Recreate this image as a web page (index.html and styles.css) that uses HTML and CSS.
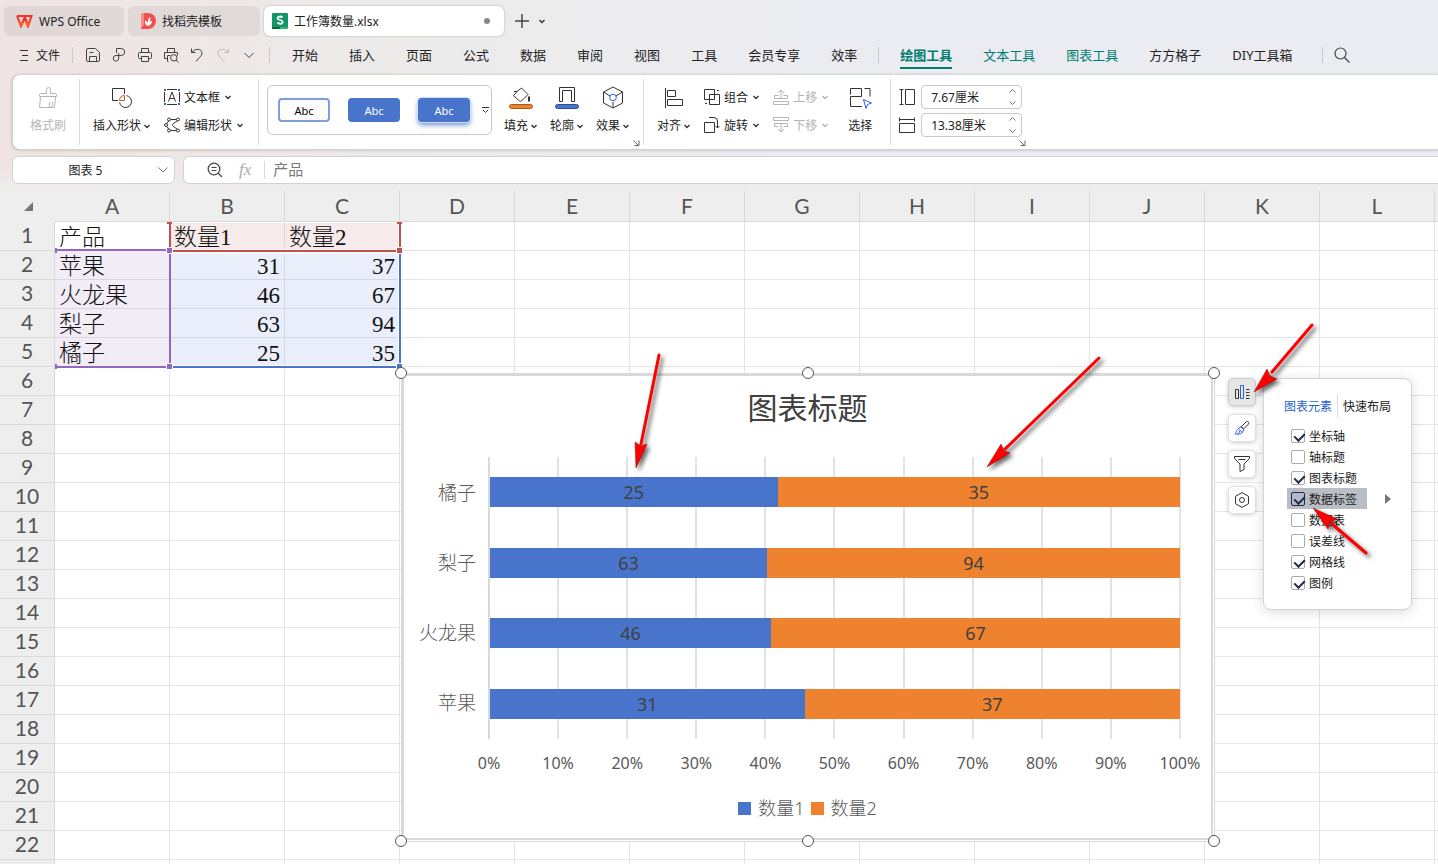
FILE: index.html
```html
<!DOCTYPE html>
<html lang="zh-CN">
<head>
  <meta charset="UTF-8">
  <meta name="viewport" content="width=device-width, initial-scale=1.0">
  <title>工作簿数量.xlsx - WPS Office</title>
  <link rel="stylesheet" href="styles.css">
</head>
<body>

  <svg class="defs" aria-hidden="true">
    <symbol id="chev" viewBox="0 0 8 8"><path d="M1.5 3 4 5.5 6.5 3" fill="none" stroke="currentColor" stroke-width="1.4"/></symbol>
    <symbol id="launch" viewBox="0 0 7 7"><path d="M.5 1.5 5 6M6 1.500V6.500H1.500" fill="none" stroke="#666"/></symbol>
  </svg>

  <header class="tabs">
    <button class="doc-tab home">
      <svg width="17" height="14" viewBox="0 0 17 14"><path d="M1 2h14.500L12 12 8.500 4 5 12 1 2M5 2l3.500 0 3.500 9" fill="none" stroke="#f8302c" stroke-width="2"/><path d="M3 7l2 5 2-4.500M10 7.500l2 4.500 2-5" fill="none" stroke="#ff5a22" stroke-width="2"/></svg>
      <span>WPS Office</span>
    </button>
    <button class="doc-tab docer">
      <svg width="15" height="16" viewBox="0 0 15 16"><path d="M0 0h7a8 8 0 0 1 0 16H0z" fill="#f2504f"/><path d="M0 0h3v12L0 15z" fill="#f98b86"/><path d="M7 13C4 12 3.500 9 4.500 7.500c1.500.5 2 2 2.300 3C6.500 8 7.500 5.500 9 4c1 2.500 0 4-.8 5.500C9 8.500 10 8 11 8c0 2.500-1.500 4.500-4 5z" fill="#fff"/></svg>
      <span>找稻壳模板</span>
    </button>
    <button class="doc-tab active">
      <svg width="16" height="16" viewBox="0 0 16 16"><rect width="16" height="16" rx="1" fill="#139566"/><path d="M0 14h8v2H0z" fill="#0b6b49"/><path d="M8 14h8v2H8z" fill="#31b681"/><path d="M10.500 4.500C9 3 5.500 3.200 5.500 5.200 5.500 7.500 10.700 6.500 10.700 9c0 2.200-3.700 2.200-5.400.7" fill="none" stroke="#fff" stroke-width="1.800"/></svg>
      <span>工作簿数量.xlsx</span>
      <i class="unsaved"></i>
    </button>
    <button class="plain add" aria-label="新建"><svg width="14" height="14" viewBox="0 0 14 14"><path d="M7 0v14M0 7h14" stroke="#444" stroke-width="1.500"/></svg></button>
    <button class="plain" aria-label="标签列表"><svg class="chev"><use href="#chev"/></svg></button>
  </header>

  <nav class="menu">
    <button class="plain file">
      <svg width="10" height="12" viewBox="0 0 10 12"><path d="M1 1.500h8M3 6.500h6M1 11.500h8" stroke="#333"/></svg>
      <span>文件</span>
    </button>
    <i class="sep"></i>
    <div class="quick">
      <button class="plain" aria-label="保存"><svg width="16" height="16" viewBox="0 0 16 16"><path d="M14.500 13V5.500l-4-4H3A1.500 1.500 0 0 0 1.500 3v10A1.500 1.500 0 0 0 3 14.500h10a1.500 1.500 0 0 0 1.500-1.500zM4.500 14.500v-5h7v5M4.500 5.500h4"/></svg></button>
      <button class="plain" aria-label="输出为PDF"><svg width="16" height="16" viewBox="0 0 16 16"><path d="M5.500 6V1.500h4.700a3.500 3.500 0 0 1 0 7H5a2.800 2.800 0 1 0 2.700 3.500V6"/></svg></button>
      <button class="plain" aria-label="打印"><svg width="16" height="16" viewBox="0 0 16 16"><path d="M4.500 5.500v-4h7v4M4.500 11.500h-2a1 1 0 0 1-1-1v-4a1 1 0 0 1 1-1h11a1 1 0 0 1 1 1v4a1 1 0 0 1-1 1h-2M4.500 9.500h7v5h-7z"/></svg></button>
      <button class="plain" aria-label="打印预览"><svg width="16" height="16" viewBox="0 0 16 16"><path d="M4.500 5.500v-4h7v4M5 11.500H1.500v-6h13v3M5.500 14.500h-1v-6h3M13 13l2.500 2.500"/><circle cx="10.800" cy="10.800" r="3.200"/></svg></button>
      <button class="plain" aria-label="撤销"><svg width="16" height="16" viewBox="0 0 16 16"><path d="M2.500 1.500v4h4M2.500 5.500C7 .5 13 2 13 6c0 3-3 4.500-6 8.500"/></svg></button>
      <button class="plain off" aria-label="恢复"><svg width="16" height="16" viewBox="0 0 16 16"><path d="M13.500 1.500v4h-4M13.500 5.500C9 .5 3 2 3 6c0 3 3 4.500 6 8.500"/></svg></button>
      <button class="plain" aria-label="更多"><svg width="16" height="16" viewBox="0 0 16 16"><path d="m3.500 6 4.500 4.500L12.500 6"/></svg></button>
    </div>
    <i class="sep"></i>
    <div class="menu-tabs">
      <a href="#">开始</a>
      <a href="#">插入</a>
      <a href="#">页面</a>
      <a href="#">公式</a>
      <a href="#">数据</a>
      <a href="#">审阅</a>
      <a href="#">视图</a>
      <a href="#">工具</a>
      <a href="#">会员专享</a>
      <a href="#">效率</a>
      <i class="sep"></i>
      <a href="#" class="tool current">绘图工具</a>
      <a href="#" class="tool">文本工具</a>
      <a href="#" class="tool">图表工具</a>
      <a href="#">方方格子</a>
      <a href="#">DIY工具箱</a>
    </div>
    <i class="sep"></i>
    <button class="plain search" aria-label="搜索"><svg width="16" height="16" viewBox="0 0 16 16"><circle cx="6.500" cy="6.500" r="5.500" fill="none" stroke="#444" stroke-width="1.200"/><path d="m10.500 10.500 5 5" stroke="#444" stroke-width="1.200"/></svg></button>
  </nav>

  <section class="ribbon">
    <div class="group paint">
      <button class="big off">
        <svg width="24" height="24" viewBox="0 0 24 24"><path d="M3.500 10.500h17v-2a1 1 0 0 0-1-1h-5v-4a2 2 0 0 0-4 0v4h-6a1 1 0 0 0-1 1zM4.500 10.500l-1 11h15l1-11M14 16l-1 5M16.500 16l-.5 5"/></svg>
        <span>格式刷</span>
      </button>
    </div>
    <div class="group shapes">
      <button class="big">
        <svg width="24" height="24" viewBox="0 0 24 24"><path d="M8 14.500H2.500v-12h12V8"/><path d="M16.500 9.600a6 6 0 1 1-6.900 6.900"/><path d="M14.500 9.500v5h-5c0-3 2-5 5-5z" stroke="#d2571b"/></svg>
        <span>插入形状<svg class="chev"><use href="#chev"/></svg></span>
      </button>
      <div class="stack">
        <button class="row"><svg width="16" height="16" viewBox="0 0 16 16"><path d="M3 .5h10M3 15.500h10M.5 3v10M15.500 3v10M4.500 12.500 8 3l3.500 9.500M5.700 9.500h4.600"/><path d="M0 0h2v2H0zM14 0h2v2h-2zM0 14h2v2H0zM14 14h2v2h-2z" fill="#2f5fe0" stroke="none"/></svg>文本框<svg class="chev"><use href="#chev"/></svg></button>
        <button class="row"><svg width="16" height="16" viewBox="0 0 16 16"><path d="M6.500 2.500h6M3 6.500 4.500 4M3 9.500 4.500 12M6.500 13.500h6M13 4C10 6 8.500 7 8.500 8s1.500 2 4.500 4"/><circle cx="5" cy="2.500" r="1.500"/><circle cx="14" cy="2.500" r="1.500"/><circle cx="2" cy="8" r="1.500"/><circle cx="5" cy="13.500" r="1.500"/><circle cx="14" cy="13.500" r="1.500"/></svg>编辑形状<svg class="chev"><use href="#chev"/></svg></button>
      </div>
    </div>
    <div class="group styles">
      <div class="gallery">
        <button class="sample outline">Abc</button>
        <button class="sample solid">Abc</button>
        <button class="sample solid raised">Abc</button>
        <button class="plain more" aria-label="更多样式"><svg width="7" height="7" viewBox="0 0 7 7"><path d="M0 .5h7M1 3l2.500 2.500L6 3" fill="none" stroke="#333"/></svg></button>
      </div>
      <button class="big">
        <svg width="24" height="24" viewBox="0 0 24 24"><path d="M5 5.500h3L12.500 2 19 8.500 12.500 15a1.500 1.500 0 0 1-2 0L4.500 9.500 8 5.500"/><path d="M20 10.500v5" stroke-width="2"/><rect x=".5" y="18.500" width="23" height="4" rx="2" fill="#f0822d" stroke="#ad591a"/></svg>
        <span>填充<svg class="chev"><use href="#chev"/></svg></span>
      </button>
      <button class="big">
        <svg width="24" height="24" viewBox="0 0 24 24"><path d="M4.500 15.500v-14h15v14h-3v-11h-9v11z"/><rect x=".5" y="18.500" width="23" height="4" rx="2" fill="#4874cb" stroke="#2b4f95"/></svg>
        <span>轮廓<svg class="chev"><use href="#chev"/></svg></span>
      </button>
      <button class="big">
        <svg width="24" height="24" viewBox="0 0 24 24"><path d="m12 1 9.500 5v11L12 22l-9.500-5V6zM2.500 6 9 10M21.500 6 15 10M12 16v6"/><circle cx="12" cy="11.500" r="3.300" stroke="#2f5fe0"/></svg>
        <span>效果<svg class="chev"><use href="#chev"/></svg></span>
      </button>
      <button class="plain launch" aria-label="形状格式"><svg width="7" height="7"><use href="#launch"/></svg></button>
    </div>
    <div class="group arrange">
      <button class="big">
        <svg width="24" height="24" viewBox="0 0 24 24"><path d="M3.500 2v20M5.500 4.500h8v6h-8zM5.500 13.500h15v6h-15z"/></svg>
        <span>对齐<svg class="chev"><use href="#chev"/></svg></span>
      </button>
      <div class="stack">
        <button class="row"><svg width="16" height="16" viewBox="0 0 16 16"><path d="M.5.500h10v10H.5zM5.500 5.500h10v10h-10zM13 1.500h2M1 14.500h2"/></svg>组合<svg class="chev"><use href="#chev"/></svg></button>
        <button class="row"><svg width="16" height="16" viewBox="0 0 16 16"><path d="M.5 5.500h10v10H.5zM5 .5h5a3.500 3.500 0 0 1 3.500 3.500v7M11.500 9l2 2 2-2"/></svg>旋转<svg class="chev"><use href="#chev"/></svg></button>
      </div>
      <div class="stack off">
        <button class="row"><svg width="16" height="16" viewBox="0 0 16 16"><path d="M8 10V1.500M5 4l3-3 3 3M5.500 6.500h-4v3h13v-3h-4M.5 12.500h15v3H.5z"/></svg>上移<svg class="chev"><use href="#chev"/></svg></button>
        <button class="row"><svg width="16" height="16" viewBox="0 0 16 16"><path d="M8 6v8.500M5 12l3 3 3-3M5.500 9.500h-4v-3h13v3h-4M.5.500h15v3H.5z"/></svg>下移<svg class="chev"><use href="#chev"/></svg></button>
      </div>
      <button class="big pick">
        <svg width="24" height="24" viewBox="0 0 24 24"><path d="M2.500 8.500v-6h11v8h-11v10H14M16.500 2.500H22v8"/><path d="m15.500 13.500 8 3.500-4 1.500-1.500 4z" stroke="#2f5fe0"/></svg>
        <span>选择</span>
      </button>
    </div>
    <div class="group size">
      <div class="stack">
        <label class="spin"><svg width="16" height="16" viewBox="0 0 16 16"><path d="M2.500.500v15M.5.500h4M.5 15.500h4M6.500.500h9v15h-9z"/></svg>
          <span class="box"><input type="text" value="7.67厘米" aria-label="高度"><svg width="9" height="18" viewBox="0 0 9 18"><path d="m1.500 4.500 3-3 3 3M1.500 13.500l3 3 3-3"/></svg></span>
        </label>
        <label class="spin"><svg width="16" height="16" viewBox="0 0 16 16"><path d="M.5 2.500h15M.5.500v4M15.500.500v4M.5 6.500h15v9H.5z"/></svg>
          <span class="box"><input type="text" value="13.38厘米" aria-label="宽度"><svg width="9" height="18" viewBox="0 0 9 18"><path d="m1.500 4.500 3-3 3 3M1.500 13.500l3 3 3-3"/></svg></span>
        </label>
      </div>
      <button class="plain launch" aria-label="大小和位置"><svg width="7" height="7"><use href="#launch"/></svg></button>
    </div>
  </section>

  <section class="formula-bar">
    <div class="name-box">
      <input type="text" value="图表 5" aria-label="名称框">
      <svg width="10" height="6" viewBox="0 0 10 6"><path d="m.5.500 4.500 4.500L9.500.500" fill="none" stroke="#777"/></svg>
    </div>
    <div class="formula">
      <svg width="16" height="16" viewBox="0 0 16 16"><circle cx="7" cy="7" r="5.800" fill="none" stroke="#444" stroke-width="1.300"/><path d="m11 11 4 4M4.500 5.500h5M4.500 8.500h5" stroke="#444" stroke-width="1.200"/></svg>
      <em class="fx">fx</em>
      <input type="text" value="产品" aria-label="编辑栏">
    </div>
  </section>

  <main class="sheet">
    <table class="grid" id="grid"></table>

    <!-- source ranges of the chart: series names, categories, values -->
    <svg class="ranges" width="410" height="190" viewBox="0 191 410 190">
      <path d="M169 251.500h230" stroke="#fff" stroke-width="4"/>
      <path d="M400 222v145M170 367h230" fill="none" stroke="#fff" stroke-width="4"/>
      <path d="M400 253v114H172" fill="none" stroke="#4874cb" stroke-width="2"/>
      <path d="M56 250h114v117H56" fill="none" stroke="#9168c0" stroke-width="2"/>
      <path d="M170 222v26M172 251h228v-29" fill="none" stroke="#c0504d" stroke-width="2"/>
      <path d="M170 222.500h229" stroke="#fff"/>
      <g stroke="#fff">
        <path d="M166.500 247.500h6v6h-6zM166.500 363.500h6v6h-6z" fill="#9168c0"/>
        <path d="M396.500 247.500h6v6h-6z" fill="#c0504d"/>
        <path d="M396.500 363.500h6v6h-6z" fill="#4874cb"/>
      </g>
      <path d="M167 222h5v2h-5zM397 222h5v2h-5z" fill="#c0504d"/>
      <path d="M55 248h2v5h-2zM55 364h2v5h-2z" fill="#9168c0"/>
    </svg>

    <figure class="chart">
      <div class="chart-area">
        <figcaption>图表标题</figcaption>
        <div class="plot-row">
          <div class="cats"><span>橘子</span><span>梨子</span><span>火龙果</span><span>苹果</span></div>
          <div class="plot">
            <div class="lines"><i></i><i></i><i></i><i></i><i></i><i></i><i></i><i></i><i></i><i></i></div>
            <div class="bar"><span class="s1" style="width:41.67%">25</span><span class="s2">35</span></div>
            <div class="bar"><span class="s1" style="width:40.13%">63</span><span class="s2">94</span></div>
            <div class="bar"><span class="s1" style="width:40.71%">46</span><span class="s2">67</span></div>
            <div class="bar"><span class="s1" style="width:45.59%">31</span><span class="s2">37</span></div>
          </div>
        </div>
        <div class="axis"><span>0%</span><span>10%</span><span>20%</span><span>30%</span><span>40%</span><span>50%</span><span>60%</span><span>70%</span><span>80%</span><span>90%</span><span>100%</span></div>
        <div class="legend"><span><i class="s1"></i>数量1</span><span><i class="s2"></i>数量2</span></div>
      </div>
      <i class="handle tl"></i><i class="handle tc"></i><i class="handle tr"></i>
      <i class="handle bl"></i><i class="handle bc"></i><i class="handle br"></i>
    </figure>

    <div class="chart-tools">
      <button class="on" aria-label="图表元素"><svg width="16" height="16" viewBox="0 0 16 16"><path d="M1.500 5.500h3v9h-3zM12 5.500h3.500M12 8.500h3.500M12 11.500h3.500M12 14.500h3.500"/><path d="M6.500 1.500h3v13h-3z" stroke="#2f5fe0"/></svg></button>
      <button aria-label="图表样式"><svg width="16" height="16" viewBox="0 0 16 16"><path d="M7 7 12 2c2-1.500 3.500.5 2.500 2L9.500 9z"/><path d="M7 7c1.500 0 2.500 1 2.500 2.500 0 4.500-5 5-8.500 4.500 1.500-1.500 1-3 2.500-4.500 1-1.300 2-2.500 3.500-2.500zM4.500 8.500 8 12.500M3.500 14c1.500-.5 2-1.500 2-3" stroke="#2f5fe0"/></svg></button>
      <button aria-label="图表筛选器"><svg width="16" height="16" viewBox="0 0 16 16"><path d="M.5.500h15v2L10 8v5.500L6 15.500V8L.5 2.500zM4.500 3.500h7"/></svg></button>
      <button aria-label="设置图表区域格式"><svg width="16" height="16" viewBox="0 0 16 16"><path d="m8 .6 6.500 3.700v7.400L8 15.400l-6.500-3.700V4.300z"/><circle cx="8" cy="8" r="2.500"/></svg></button>
    </div>

    <aside class="panel">
      <div class="panel-tabs">
        <button class="plain on">图表元素</button>
        <button class="plain">快速布局</button>
      </div>
      <label><input type="checkbox" checked>坐标轴</label>
      <label><input type="checkbox">轴标题</label>
      <label><input type="checkbox" checked>图表标题</label>
      <label class="hover"><input type="checkbox" checked>数据标签<i class="sub"></i></label>
      <label><input type="checkbox">数据表</label>
      <label><input type="checkbox">误差线</label>
      <label><input type="checkbox" checked>网格线</label>
      <label><input type="checkbox" checked>图例</label>
    </aside>
  </main>

  <svg class="arrows" width="1438" height="600" viewBox="0 0 1438 600">
    <g stroke="#f00" stroke-width="3" stroke-linecap="round">
      <path d="M659 355 641 444M1099 358l-94 91M1312 325l-40 47M1366 553l-34-29"/>
    </g>
    <g fill="#f00" stroke="#8c1010" stroke-width=".5">
      <path d="m636 468-1-26 6 4 6-2z"/>
      <path d="m987 467 14-23 3 7 6 2z"/>
      <path d="m1254 392 13-23 3 7 7 3z"/>
      <path d="m1313 508 24 11-7 3-2 7z"/>
    </g>
  </svg>

  <script src="script.js"></script>
</body>
</html>
```

FILE: styles.css
```css
:root {
  --text: #222;
  --line: #d9d9d9;
  --cell-line: #e4e4e4;
  --head: #eee;
  --green: #007d6c;
  --blue: #4874cb;
  --orange: #ef822e;
}

* {
  box-sizing: border-box;
}

body {
  margin: 0;
  height: 100vh;
  display: flex;
  flex-direction: column;
  overflow: hidden;
  position: relative;
  font: 12px "Noto Sans", "Noto Sans CJK SC", sans-serif;
  color: var(--text);
  background: linear-gradient(90deg, #efe4e3 0, #ecebea 400px, #ebecf2 900px);
}

button, input {
  font: inherit;
  color: inherit;
  border: 0;
  padding: 0;
  margin: 0;
  background: none;
}

i {
  font-style: normal;
}

svg {
  display: block;
  flex: none;
}

.defs {
  position: absolute;
  width: 0;
  height: 0;
}

.plain {
  display: flex;
  align-items: center;
  justify-content: center;
}

.chev {
  width: 8px;
  height: 8px;
  color: #333;
}

.sep {
  width: 1px;
  height: 16px;
  background: #c9c9cb;
}

/* document tabs */

.tabs {
  display: flex;
  align-items: center;
  padding: 5px 4px 0;
  height: 37px;
}

.doc-tab {
  display: flex;
  align-items: center;
  height: 30px;
  margin-right: 4px;
  border-radius: 6px;
  background: rgba(0, 0, 0, 0.06);
}

.home {
  width: 120px;
  padding-left: 12px;
  gap: 6px;
}

.docer {
  width: 132px;
  padding-left: 13px;
  gap: 6px;
}

.doc-tab.active {
  width: 240px;
  padding: 0 14px 0 8px;
  gap: 6px;
  margin-right: 11px;
  background: #fff;
  box-shadow: 0 0 2px rgba(0, 0, 0, 0.3);
}

.unsaved {
  width: 6px;
  height: 6px;
  margin-left: auto;
  border-radius: 50%;
  background: #888;
}

.add {
  margin-right: 9px;
}

/* menu line */

.menu {
  display: flex;
  align-items: center;
  height: 38px;
  padding: 0 0 2px 19px;
}

.file {
  gap: 7px;
  margin-right: 12px;
}

.quick {
  display: flex;
  margin: 0 7px;
}

.quick .plain {
  width: 26px;
  height: 24px;
}

.quick svg {
  fill: none;
  stroke: #444;
}

.quick .off svg {
  stroke: #bbb;
}

.menu-tabs {
  display: flex;
  align-items: center;
  gap: 31px;
  margin: 0 29px 0 22px;
  font-size: 13px;
  white-space: nowrap;
}

.menu-tabs .sep {
  margin: 0 -10px;
}

.menu-tabs a {
  height: 28px;
  line-height: 28px;
  color: var(--text);
  text-decoration: none;
}

.menu-tabs .tool {
  color: var(--green);
}

.menu-tabs .current {
  font-weight: 700;
  background: linear-gradient(var(--green), var(--green)) bottom / 100% 2px no-repeat;
}

.search {
  margin-left: 11px;
}

/* ribbon */

.ribbon {
  display: flex;
  height: 75px;
  margin-left: 12px;
  border: 1px solid #d2d2d4;
  border-width: 0 0 1px 1px;
  border-radius: 8px 0 0 8px;
  background: #fff;
  box-shadow: 0 0 3px rgba(0, 0, 0, 0.25);
}

.group {
  position: relative;
  display: flex;
  padding-top: 8px;
}

.group:not(:last-child)::after {
  content: "";
  position: absolute;
  right: 0;
  top: 4px;
  bottom: 4px;
  width: 1px;
  background: var(--line);
}

.big {
  display: flex;
  flex-direction: column;
  align-items: center;
  height: 57px;
}

.big > svg {
  margin: 3px 2px 2px;
}

.big > span {
  display: flex;
  align-items: center;
  gap: 2px;
  line-height: 28px;
  white-space: nowrap;
}

.big > svg, .row > svg:first-child, .spin svg {
  fill: none;
  stroke: #333;
}

.row {
  display: flex;
  align-items: center;
  gap: 4px;
  height: 28px;
  white-space: nowrap;
}

.off, .off .chev {
  color: #b5b5b5;
}

.big.off > svg, .off .row > svg:first-child {
  stroke: #b5b5b5;
}

.paint {
  padding-left: 17px;
  padding-right: 14px;
}

.shapes {
  padding-left: 13px;
  padding-right: 15px;
  gap: 13px;
}

.styles {
  padding-left: 8px;
  padding-right: 14px;
  gap: 12px;
}

.arrange {
  padding-left: 13px;
  padding-right: 17px;
  gap: 13px;
}

.pick {
  margin-left: 4px;
}

.size {
  padding-left: 8px;
  padding-right: 8px;
}

.gallery {
  display: flex;
  align-items: center;
  gap: 18px;
  width: 225px;
  height: 50px;
  margin-top: 2px;
  padding-left: 10px;
  border: 1px solid #c8c8c8;
  border-radius: 6px;
}

.sample {
  width: 52px;
  height: 24px;
  border-radius: 4px;
  font-size: 11px;
}

.outline {
  border: 2px solid #7f9ddb;
  color: #000;
}

.solid {
  background: var(--blue);
  color: #fff;
}

.raised {
  box-shadow: 0 0 0 1px #d5dff3, 0 3px 5px rgba(72, 116, 203, 0.8);
}

.more {
  margin-left: -6px;
}

.launch {
  position: absolute;
  right: 4px;
  bottom: 3px;
}

.spin {
  display: flex;
  align-items: center;
  gap: 6px;
  height: 28px;
}

.spin .box {
  display: flex;
  align-items: center;
  width: 101px;
  height: 24px;
  padding: 0 4px 0 9px;
  border: 1px solid #c8c8c8;
  border-radius: 4px;
}

.spin input {
  flex: 1;
  min-width: 0;
}

.spin .box svg {
  stroke: #777;
}

/* formula bar */

.formula-bar {
  display: flex;
  gap: 8px;
  height: 41px;
  padding: 6px 0 7px 12px;
  background: linear-gradient(transparent 20px, rgba(238, 238, 238, 0.9));
}

.name-box, .formula {
  display: flex;
  align-items: center;
  border: 1px solid #d2d2d4;
  border-radius: 6px;
  background: #fff;
}

.name-box {
  width: 163px;
  padding-right: 6px;
}

.name-box input {
  flex: 1;
  min-width: 0;
  text-align: center;
}

.formula {
  flex: 1;
  padding-left: 23px;
  border-right: 0;
  border-radius: 6px 0 0 6px;
}

.fx {
  margin: 0 13px 0 16px;
  font: italic 17px "Liberation Serif", serif;
  color: #aaa;
}

.formula input {
  flex: 1;
  height: 18px;
  padding: 0 0 3px 8px;
  border-left: 1px solid var(--line);
  font-size: 15px;
  color: #777;
}

/* cells */

.sheet {
  position: relative;
  flex: 1;
  overflow: hidden;
  background: #fff;
}

.grid {
  table-layout: fixed;
  width: 0;
  border-spacing: 0;
}

.grid th, .grid td {
  width: 115px;
  height: 29px;
  padding: 0;
  border: solid var(--cell-line);
  border-width: 0 1px 1px 0;
}

.grid th {
  padding-bottom: 3px;
  background: var(--head);
  border-color: var(--line);
  font: 21px/24px Lato, sans-serif;
  color: #555;
}

.grid thead th {
  height: 31px;
  padding: 0;
}

.grid th:first-child {
  width: 55px;
}

.grid thead th:first-child {
  border: 0;
}

.corner {
  width: 9px;
  height: 9px;
  margin-left: 24px;
  background: #777;
  clip-path: polygon(100% 0, 100% 100%, 0 100%);
}

.grid td {
  padding: 3px 4px 0;
  font: 300 23px/25px "Liberation Serif", "Noto Sans CJK SC", serif;
  color: #111;
  white-space: nowrap;
}

.grid td.num {
  text-align: right;
}

.grid td.names {
  background: #f7eaea;
  border-color: #e8d8d8;
}

.grid td.cats-range {
  background: #f2ecf7;
  border-color: #ddd5e4;
}

.grid td.values {
  background: #e9eefa;
  border-color: #d2d8e6;
}

.ranges {
  position: absolute;
  left: 0;
  top: 0;
}

/* chart object */

.chart {
  position: absolute;
  left: 401px;
  top: 182px;
  width: 814px;
  height: 469px;
  margin: 0;
  padding: 0 1px 1px 0;
  border: solid var(--line);
  border-width: 0 1px 1px 0;
  background: #fff;
}

.chart-area {
  height: 100%;
  border: solid var(--line);
  border-width: 3px 2px 2px 3px;
  padding: 12px 31px 0 0;
  font-family: "Noto Sans", "Noto Sans CJK SC", sans-serif;
  color: #595959;
}

.chart figcaption {
  margin: 0 -31px 29px 0;
  font-size: 30px;
  line-height: 40px;
  text-align: center;
  color: #404040;
}

.plot-row {
  display: flex;
  gap: 12px;
  height: 282px;
}

.cats {
  display: flex;
  flex-direction: column;
  width: 72px;
  padding-bottom: 2px;
  font-size: 19px;
  font-weight: 300;
  text-align: right;
}

.cats span {
  flex: 1;
  display: flex;
  align-items: center;
  justify-content: flex-end;
}

.plot {
  position: relative;
  flex: 1;
  display: flex;
  flex-direction: column;
  justify-content: space-around;
  border-left: 2px solid var(--line);
}

.lines {
  position: absolute;
  inset: 0 -1px 0 0;
  display: flex;
}

.lines i {
  flex: 1;
  border-right: 2px solid #e2e2e2;
}

.bar {
  position: relative;
  display: flex;
  height: 30px;
  font-size: 18px;
  line-height: 30px;
  text-align: center;
  color: #404040;
}

.bar .s2 {
  flex: 1;
}

.s1 {
  background: var(--blue);
}

.s2 {
  background: var(--orange);
}

.axis {
  display: flex;
  justify-content: space-between;
  margin: 12px 0 21px 85px;
  font-size: 16px;
  line-height: 24px;
}

.axis span {
  display: flex;
  justify-content: center;
  width: 0;
}

.legend {
  display: flex;
  justify-content: center;
  gap: 6px;
  margin-right: -31px;
  font-size: 18px;
  font-weight: 300;
  line-height: 24px;
}

.legend span {
  display: flex;
  align-items: center;
  gap: 7px;
}

.legend i {
  width: 13px;
  height: 13px;
}

.handle {
  position: absolute;
  width: 12px;
  height: 12px;
  border: 1px solid #555;
  border-radius: 50%;
  background: #fff;
}

.tl, .tc, .tr { top: -6px; }
.bl, .bc, .br { bottom: -6px; }
.tl, .bl { left: -6px; }
.tc, .bc { left: 50%; margin-left: -6px; }
.tr, .br { right: -6px; }

/* floating chart tools */

.chart-tools {
  position: absolute;
  left: 1228px;
  top: 187px;
  display: flex;
  flex-direction: column;
  gap: 8px;
}

.chart-tools button {
  display: flex;
  align-items: center;
  justify-content: center;
  width: 28px;
  height: 28px;
  border: 1px solid #e2e2e2;
  border-radius: 5px;
  background: #fff;
  box-shadow: 0 1px 4px rgba(0, 0, 0, 0.2);
}

.chart-tools .on {
  border-color: #ccc;
  background: #e6e6e6;
}

.chart-tools svg {
  fill: none;
  stroke: #333;
}

.panel {
  position: absolute;
  left: 1263px;
  top: 187px;
  width: 149px;
  padding: 15px 18px 16px 20px;
  border: 1px solid #d5d5d5;
  border-radius: 8px;
  background: #fff;
  box-shadow: 0 2px 12px rgba(0, 0, 0, 0.15);
}

.panel-tabs {
  display: flex;
  margin-bottom: 7px;
  white-space: nowrap;
}

.panel-tabs button {
  height: 24px;
}

.panel-tabs .on {
  padding-right: 5px;
  margin-right: 5px;
  border-right: 1px solid #ddd;
  color: #1f5fd0;
}

.panel label {
  position: relative;
  display: flex;
  align-items: center;
  gap: 4px;
  width: 80px;
  height: 21px;
  margin-left: 3px;
  padding-left: 4px;
  white-space: nowrap;
}

.panel .hover {
  background: #b9bdc6;
}

.panel input {
  appearance: none;
  width: 14px;
  height: 14px;
  border: 1px solid #aaa;
  border-radius: 2px;
  background: #fff;
}

.panel input:checked::after {
  content: "";
  display: block;
  width: 5px;
  height: 8px;
  margin: 1px 4px;
  border: solid #222b40;
  border-width: 0 2px 2px 0;
  transform: rotate(45deg);
}

.panel .hover input {
  border-color: #222b40;
  background: #b4bacb;
}

.sub {
  position: absolute;
  left: 98px;
  border: solid transparent;
  border-width: 5px 0 5px 6px;
  border-left-color: #777;
}

.arrows {
  position: absolute;
  left: 0;
  top: 0;
  pointer-events: none;
  filter: drop-shadow(3px 3px 2px rgba(0, 0, 0, 0.6));
}
```

FILE: script.js
```js
const rows = [
  ["产品", "数量1", "数量2"],
  ["苹果", 31, 37],
  ["火龙果", 46, 67],
  ["梨子", 63, 94],
  ["橘子", 25, 35]
];
// last column and row stay unlabelled, they only run off the window
const cols = [..."ABCDEFGHIJKL", ""];
const rowCount = 22;

function cellClass(r, c) {
  if (r > 4 || c > 2) return "";
  if (r === 0) return c === 0 ? "" : "names";
  return c === 0 ? "cats-range" : "values num";
}

let html = '<thead><tr><th><div class="corner"></div></th>';
html += cols.map(c => `<th>${c}</th>`).join("") + "</tr></thead><tbody>";

for (let r = 0; r <= rowCount; r++) {
  html += `<tr><th>${r < rowCount ? r + 1 : ""}</th>`;
  for (let c = 0; c < cols.length; c++) {
    const value = rows[r] && rows[r][c] !== undefined ? rows[r][c] : "";
    html += `<td class="${cellClass(r, c)}">${value}</td>`;
  }
  html += "</tr>";
}

document.getElementById("grid").innerHTML = html + "</tbody>";
```
